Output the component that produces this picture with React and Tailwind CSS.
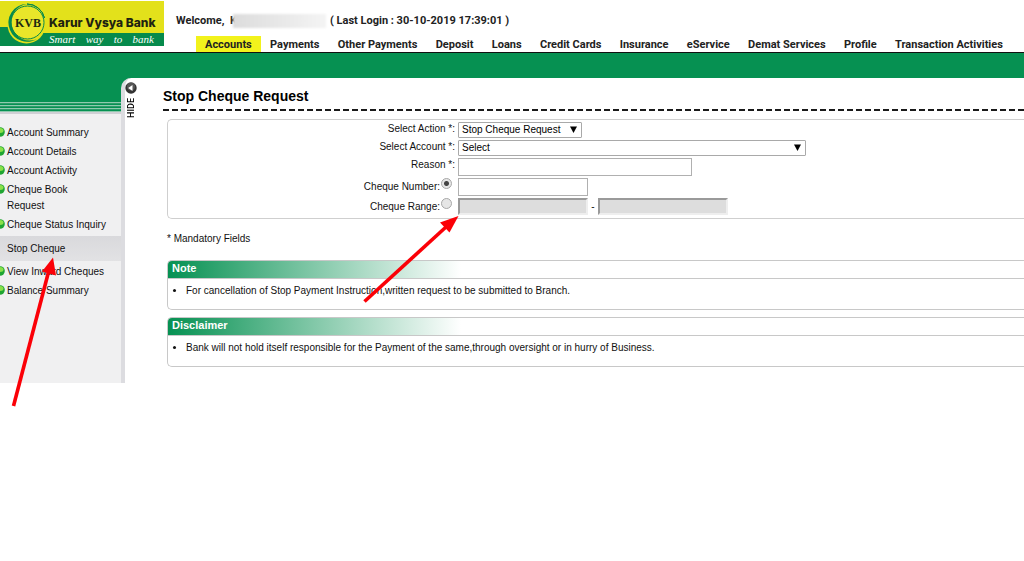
import React from "react";

const NAV = [
  "Accounts",
  "Payments",
  "Other Payments",
  "Deposit",
  "Loans",
  "Credit Cards",
  "Insurance",
  "eService",
  "Demat Services",
  "Profile",
  "Transaction Activities",
];

const MENU = [
  { label: "Account Summary" },
  { label: "Account Details" },
  { label: "Account Activity" },
  { label: "Cheque Book Request" },
  { label: "Cheque Status Inquiry" },
  { label: "Stop Cheque", active: true },
  { label: "View Inward Cheques" },
  { label: "Balance Summary" },
];

function Logo() {
  return (
    <div className="relative mt-px h-[45px] w-[164px] shrink-0 overflow-hidden">
      <svg viewBox="0 0 164 45" className="absolute inset-0 size-full" aria-hidden="true">
        <rect width="164" height="45" fill="#e3e11b" />
        <path d="M0 26H10L14 32H164V45H0Z" fill="#068a4c" />
        <circle cx="26.500" cy="23.500" r="19" fill="#e3e11b" />
        <circle cx="27.500" cy="21.500" r="16.500" fill="#e9e62a" stroke="#068a4c" strokeWidth="1" />
        <path
          d="M27 3A18.500 18.500 0 0 0 10 29A18.500 18.500 0 0 0 37 38A18 18 0 0 1 12.500 27A18 18 0 0 1 27 3Z"
          fill="#068a4c"
        />
        <path d="M27 3A18 18 0 0 1 44.500 17A18 18 0 0 0 27 3Z" stroke="#068a4c" strokeWidth="1" fill="#068a4c" />
      </svg>
      <div className="relative flex h-full">
        <span className="w-[49px] pl-[15px] pt-[15px] font-['Liberation_Serif',serif] text-[12px] leading-[14px] font-bold text-[#1e2a12]">
          KVB
        </span>
        <div className="flex w-[105px] flex-col pt-[14px]">
          <span className="font-['Inter',sans-serif] text-[12px] leading-4 font-extrabold whitespace-nowrap text-[#1e2311]">
            Karur Vysya Bank
          </span>
          <span className="mt-[2px] flex justify-between font-['Liberation_Serif',serif] text-[11px] leading-3 text-white italic">
            <span>Smart</span>
            <span>way</span>
            <span>to</span>
            <span>bank</span>
          </span>
        </div>
      </div>
    </div>
  );
}

function Ball() {
  return (
    <svg viewBox="0 0 5 10" className="mt-[2px] h-[10px] w-[5px] shrink-0" aria-hidden="true">
      <circle cx="0" cy="5" r="4.800" fill="#1fa532" />
      <ellipse cx="0" cy="3.500" rx="3.500" ry="2.500" fill="#8be04a" />
    </svg>
  );
}

function Row({ label, htmlFor, radio, height, children }) {
  return (
    <div className={"flex items-start " + height}>
      <div className="flex w-[290px] shrink-0 items-start justify-end pr-[3px] leading-3">
        <label htmlFor={htmlFor} className={radio ? "pt-[3px]" : "pt-px"}>
          {label}
        </label>
        {radio}
      </div>
      <div className="flex items-start">{children}</div>
    </div>
  );
}

function Radio({ id, checked, label }) {
  return (
    <input
      id={id}
      type="radio"
      name="mode"
      aria-label={label}
      defaultChecked={checked}
      className="mr-[3px] ml-px size-[11px] appearance-none rounded-full border border-[#a8a8a8] bg-[#e6e6e6] checked:bg-[radial-gradient(circle,#444_0_2px,#e6e6e6_3px)]"
    />
  );
}

function Select({ id, width, text }) {
  return (
    <div className={"relative " + width}>
      <select
        id={id}
        className="block h-4 w-full appearance-none rounded-[1px] border border-[#a9a9a9] bg-white pl-[3px] text-[10px] leading-[14px] text-black"
      >
        <option>{text}</option>
      </select>
      <svg viewBox="0 0 7 7" className="pointer-events-none absolute top-1 right-[5px] size-[7px]" aria-hidden="true">
        <path d="M0 0.500H7L3.500 7Z" fill="#000" />
      </svg>
    </div>
  );
}

function InfoBox({ title, text }) {
  return (
    <section className="overflow-hidden rounded-l-[5px] border border-r-0 border-[#c8c8c8]">
      <h2 className="h-[18px] border-b border-[#c8c8c8] bg-[linear-gradient(to_right,#069152,#ffffff_293px)] pl-1 text-[11px] leading-[15px] font-bold text-white">
        {title}
      </h2>
      <ul className="h-[30px] list-disc pt-1 pl-[18px] leading-4">
        <li>{text}</li>
      </ul>
    </section>
  );
}

const SUNKEN = "h-[17px] w-[130px] border-2 border-t-[#9a9a9a] border-l-[#9a9a9a] border-r-[#eeeeee] border-b-[#eeeeee] bg-[#dddddd]";

export default function App() {
  return (
    <div className="relative min-h-screen overflow-hidden bg-white font-['Liberation_Sans',Arial,sans-serif] text-[10px] text-[#111]">
      <header className="flex h-[53px] border-b border-[#111]">
        <Logo />
        <div className="flex min-w-0 grow flex-col justify-between font-['Roboto',Arial,sans-serif] text-[11px] font-bold text-[#222]">
          <div className="flex items-center pt-[14px] pl-3 leading-[14px] whitespace-nowrap">
            <span className="w-[54px]">Welcome,</span>
            <span className="w-2">K</span>
            <span className="relative -ml-[5px] mr-1 h-[14px] w-[93px] bg-linear-to-r from-[#dcdcdc] to-[#f4f4f4] blur-[1px]" />
            <span>( Last Login : 30-10-2019 17:39:01 )</span>
          </div>
          <nav className="mr-3 ml-8 flex justify-between whitespace-nowrap">
            {NAV.map((n, i) => (
              <a key={n} href="#" className={"h-4 px-[9px] leading-[18px] " + (i === 0 ? "bg-[#f2f21c]" : "")}>
                {n}
              </a>
            ))}
          </nav>
        </div>
      </header>
      <div className="h-[25px] bg-[#069152]" />

      <div className="flex bg-[#069152]">
        <aside className="flex w-[121px] shrink-0 flex-col">
          <div className="mt-6 h-[10px] bg-[repeating-linear-gradient(to_bottom,#8fc9ad_0_1px,#2a9c68_1px_2px,#069152_2px_3px)]" />
          <div className="h-[2px] bg-[#d0d0d5]" />
          <nav className="flex grow flex-col gap-[3px] bg-[#f0f0f1] pt-[11px] leading-4">
            {MENU.map((m) =>
              m.active ? (
                <a key={m.label} href="#" className="block bg-linear-to-b from-[#d9d9dc] to-[#e2e2e4] pl-[7px] leading-[25px]">
                  {m.label}
                </a>
              ) : (
                <a key={m.label} href="#" className="flex gap-[2px]">
                  <Ball />
                  <span>{m.label === "Cheque Book Request" ? <>Cheque Book<br />Request</> : m.label}</span>
                </a>
              )
            )}
          </nav>
        </aside>

        <main className="flex min-w-0 grow rounded-tl-[10px] border-l-4 border-[#dcdce0] bg-white pb-4">
          <button type="button" className="flex w-[38px] shrink-0 flex-col items-start pt-[4px]">
            <svg viewBox="0 0 12 12" className="size-3" aria-hidden="true">
              <circle cx="6" cy="6" r="5.700" fill="#333" />
              <circle cx="6" cy="4.500" r="4" fill="#777" opacity=".5" />
              <path d="M3.200 6L7.500 3V9Z" fill="#fff" />
            </svg>
            <span className="mt-1 rotate-180 font-['Roboto',Arial,sans-serif] text-[9px] leading-3 font-medium text-black [writing-mode:vertical-rl]">
              HIDE
            </span>
          </button>
          <div className="min-w-0 grow">
            <h1 className="pt-[9px] text-[14px] leading-[18px] font-bold text-black">Stop Cheque Request</h1>
            <div className="mt-1 h-[2px] bg-[repeating-linear-gradient(to_right,#1a1a1a_0_6px,transparent_6px_9px)]" />
            <div className="mt-2 ml-1">
              <form className="rounded-l-[5px] border border-r-0 border-[#cfcfcf] pt-[2px]">
                <Row label="Select Action *:" htmlFor="action" height="h-[18px]">
                  <Select id="action" width="w-[124px]" text="Stop Cheque Request" />
                </Row>
                <Row label="Select Account *:" htmlFor="account" height="h-[18px]">
                  <Select id="account" width="w-[348px]" text="Select" />
                </Row>
                <Row label="Reason *:" htmlFor="reason" height="h-5">
                  <input id="reason" className="h-[18px] w-[234px] border border-[#b0b0b0] bg-white" />
                </Row>
                <Row label="Cheque Number:" htmlFor="number" height="h-5" radio={<Radio id="r1" label="Use cheque number" checked />}>
                  <input id="number" className="h-[18px] w-[130px] border border-[#b0b0b0] bg-white" />
                </Row>
                <Row label="Cheque Range:" htmlFor="from" height="h-5" radio={<Radio id="r2" label="Use cheque range" />}>
                  <input id="from" disabled className={SUNKEN} />
                  <span className="w-[10px] text-center leading-[18px]">-</span>
                  <input id="to" aria-label="Cheque range end" disabled className={SUNKEN} />
                </Row>
              </form>
              <p className="mt-3 mb-[13px] leading-4">* Mandatory Fields</p>
              <div className="flex flex-col gap-[7px]">
                <InfoBox title="Note" text="For cancellation of Stop Payment Instruction,written request to be submitted to Branch." />
                <InfoBox
                  title="Disclaimer"
                  text="Bank will not hold itself responsible for the Payment of the same,through oversight or in hurry of Business."
                />
              </div>
            </div>
          </div>
        </main>
      </div>

      <svg viewBox="0 0 460 410" className="pointer-events-none absolute top-0 left-0 h-[410px] w-[460px]" aria-hidden="true">
        <g stroke="#fb0007" strokeWidth="3.600" fill="#fb0007">
          <path d="M13.500 406L48.500 272" />
          <path d="M53 257.500L42 271.500L56 275.500Z" stroke="none" />
          <path d="M364.500 301.500L446 227" />
          <path d="M458.500 216L440 222.500L449.500 232.500Z" stroke="none" />
        </g>
      </svg>
    </div>
  );
}
